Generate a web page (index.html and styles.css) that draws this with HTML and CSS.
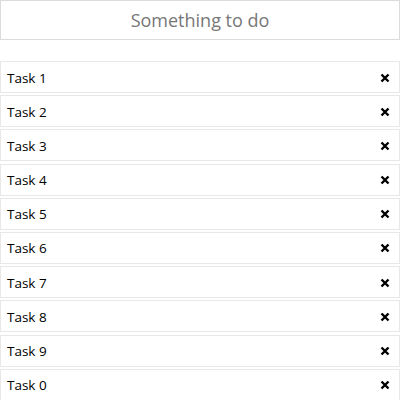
FILE: index.html
```html
<!DOCTYPE html>
<html>
<head>
<meta charset="utf-8">
<link rel="stylesheet" href="styles.css">
</head>
<body>
<div class="app">
  <input class="new-task" type="text" placeholder="Something to do">
  <ul class="tasks">
    <li class="task"><span class="label">Task 1</span><span class="remove"><svg viewBox="0 0 10 10" width="10" height="10"><path d="M1.5 1.5L8.5 8.5M8.5 1.5L1.5 8.5"/></svg></span></li>
    <li class="task"><span class="label">Task 2</span><span class="remove"><svg viewBox="0 0 10 10" width="10" height="10"><path d="M1.5 1.5L8.5 8.5M8.5 1.5L1.5 8.5"/></svg></span></li>
    <li class="task"><span class="label">Task 3</span><span class="remove"><svg viewBox="0 0 10 10" width="10" height="10"><path d="M1.5 1.5L8.5 8.5M8.5 1.5L1.5 8.5"/></svg></span></li>
    <li class="task"><span class="label">Task 4</span><span class="remove"><svg viewBox="0 0 10 10" width="10" height="10"><path d="M1.5 1.5L8.5 8.5M8.5 1.5L1.5 8.5"/></svg></span></li>
    <li class="task"><span class="label">Task 5</span><span class="remove"><svg viewBox="0 0 10 10" width="10" height="10"><path d="M1.5 1.5L8.5 8.5M8.5 1.5L1.5 8.5"/></svg></span></li>
    <li class="task"><span class="label">Task 6</span><span class="remove"><svg viewBox="0 0 10 10" width="10" height="10"><path d="M1.5 1.5L8.5 8.5M8.5 1.5L1.5 8.5"/></svg></span></li>
    <li class="task"><span class="label">Task 7</span><span class="remove"><svg viewBox="0 0 10 10" width="10" height="10"><path d="M1.5 1.5L8.5 8.5M8.5 1.5L1.5 8.5"/></svg></span></li>
    <li class="task"><span class="label">Task 8</span><span class="remove"><svg viewBox="0 0 10 10" width="10" height="10"><path d="M1.5 1.5L8.5 8.5M8.5 1.5L1.5 8.5"/></svg></span></li>
    <li class="task"><span class="label">Task 9</span><span class="remove"><svg viewBox="0 0 10 10" width="10" height="10"><path d="M1.5 1.5L8.5 8.5M8.5 1.5L1.5 8.5"/></svg></span></li>
    <li class="task"><span class="label">Task 0</span><span class="remove"><svg viewBox="0 0 10 10" width="10" height="10"><path d="M1.5 1.5L8.5 8.5M8.5 1.5L1.5 8.5"/></svg></span></li>
  </ul>
</div>
</body>
</html>
```
FILE: styles.css
```css
html, body {
  margin: 0;
  padding: 0;
  background: #fff;
}
body {
  font-family: "Open Sans", "Noto Sans", sans-serif;
  color: #000;
}
.app {
  display: flex;
  flex-direction: column;
}
.new-task {
  box-sizing: border-box;
  width: 400px;
  height: 40px;
  margin: 0 0 21px 0;
  padding: 0 8px;
  border: 1px solid #dcdcdc;
  font-family: "Open Sans", "Noto Sans", sans-serif;
  font-size: 18px;
  text-align: center;
  outline: none;
  background: #fff;
}
.new-task::placeholder {
  color: #777;
  opacity: 1;
}
.tasks {
  list-style: none;
  margin: 0;
  padding: 0;
  display: flex;
  flex-direction: column;
  gap: 2.2px;
}
.task {
  box-sizing: border-box;
  height: 32px;
  display: flex;
  align-items: center;
  justify-content: space-between;
  padding: 1px 9px 0 6px;
  border: 1px solid #e8e8e8;
  font-size: 13.5px;
}
.remove {
  display: flex;
  width: 10px;
  height: 10px;
}
.remove path {
  stroke: #000;
  stroke-width: 2.4;
  fill: none;
}
```
